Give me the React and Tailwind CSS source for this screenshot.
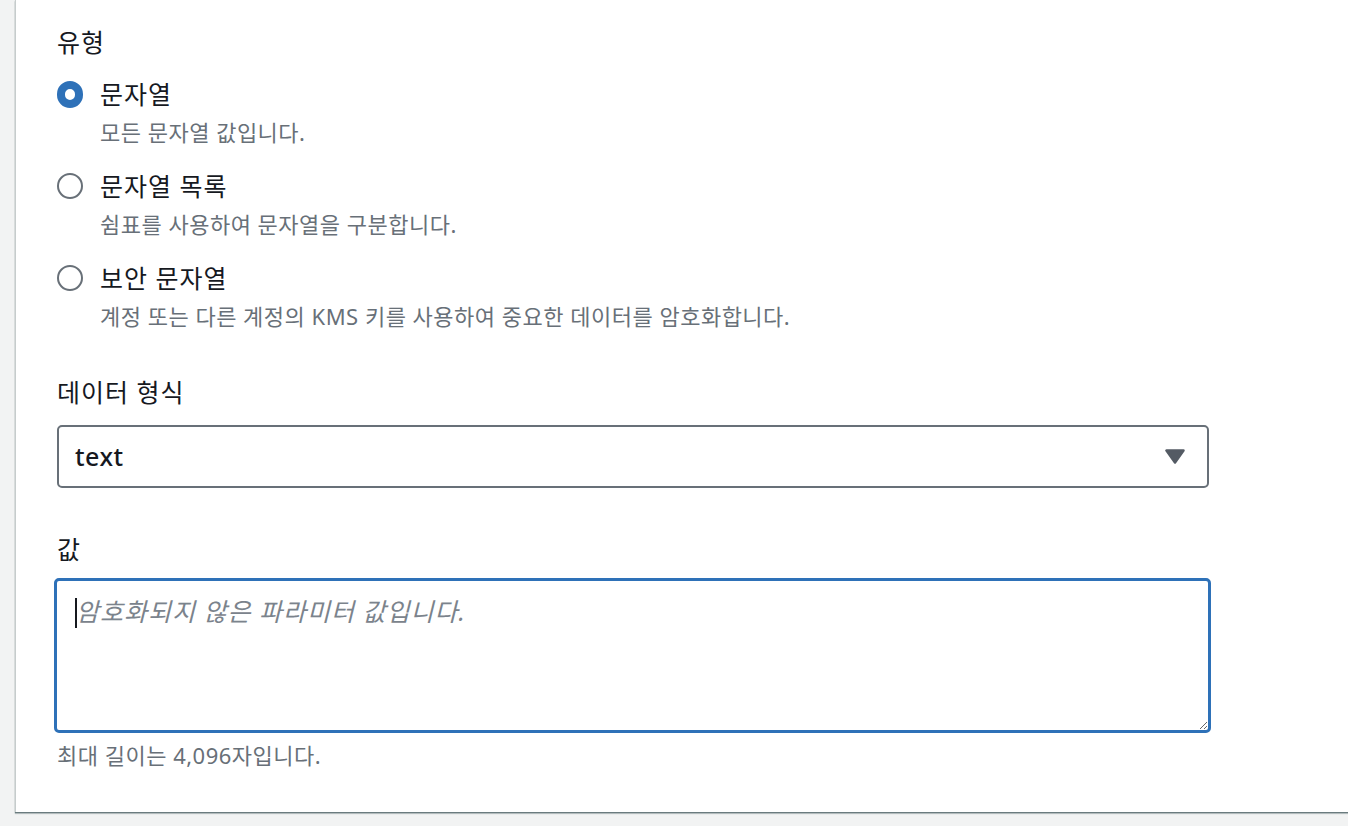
import React from "react";

function Radio({ checked, label, desc }) {
  return (
    <div className="flex items-start">
      <div className="flex h-[32px] w-[26px] shrink-0 items-center justify-center">
        {checked ? (
          <span className="block h-[27px] w-[27px] rounded-full border-[8px] border-[#2e71b8] bg-white" />
        ) : (
          <span className="block h-[26px] w-[26px] rounded-full border-2 border-[#687078] bg-white" />
        )}
      </div>
      <div className="ml-[17px] flex flex-col">
        <span className="text-[25px] leading-[32px] tracking-[1px] text-[#16191f]">{label}</span>
        <span className="mt-[8px] text-[22px] leading-[28px] tracking-[0.5px] text-[#687078]">{desc}</span>
      </div>
    </div>
  );
}

export default function App() {
  return (
    <div className="flex min-h-screen bg-[#f2f3f3] pl-[15px] pb-[14px] font-['Noto_Sans','Noto_Sans_CJK_KR',sans-serif]">
      <div className="-mr-2 flex-1 border-l border-[#c6cccc] bg-white pl-[41px] pt-[26px] pb-[43px] shadow-[0_1px_1px_0_rgba(0,28,36,0.45),0_2px_1px_0_rgba(0,28,36,0.2)]">
        <div className="text-[25px] leading-[32px] tracking-[1px] text-[#16191f]">유형</div>

        <div className="mt-[20px] flex flex-col gap-[24px]">
          <Radio checked label="문자열" desc="모든 문자열 값입니다." />
          <Radio label="문자열 목록" desc="쉼표를 사용하여 문자열을 구분합니다." />
          <Radio label="보안 문자열" desc="계정 또는 다른 계정의 KMS 키를 사용하여 중요한 데이터를 암호화합니다." />
        </div>

        <div className="mt-[46px] text-[25px] leading-[32px] tracking-[1px] text-[#16191f]">데이터 형식</div>
        <div className="mt-[17px] flex h-[63px] w-[1152px] items-center justify-between rounded-[5px] border-2 border-[#687078] bg-white pl-[16px] pr-[22px]">
          <span className="text-[25px] font-medium tracking-[0.5px] text-[#16191f]">text</span>
          <svg width="20" height="15" viewBox="0 0 20 15" aria-hidden="true">
            <path d="M1.5 1.5 H18.5 L10 13.5 Z" fill="#545b64" stroke="#545b64" strokeWidth="2.5" strokeLinejoin="round" />
          </svg>
        </div>

        <div className="mt-[45px] text-[25px] leading-[32px] tracking-[1px] text-[#16191f]">값</div>
        <div className="relative mt-[13px] -ml-[3px] w-[1157px]">
          <textarea
            className="block h-[155px] w-full resize-y rounded-[5px] border-[3px] border-[#2e71b8] bg-white pl-[19px] pt-[14px] text-[25px] italic leading-[32px] tracking-[1px] text-[#16191f] outline-none placeholder:text-[#7b838c]"
            placeholder="암호화되지 않은 파라미터 값입니다."
          />
          <span className="pointer-events-none absolute left-[21px] top-[20px] h-[30px] w-[2px] bg-[#16191f]" />
        </div>
        <div className="mt-[8px] text-[22px] leading-[28px] tracking-[0.5px] text-[#687078]">최대 길이는 4,096자입니다.</div>
      </div>
    </div>
  );
}
